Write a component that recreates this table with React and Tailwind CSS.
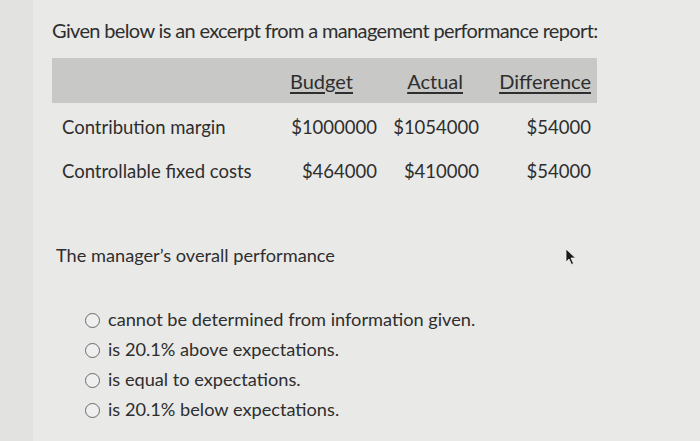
import React from "react";

const rows = [
  { label: "Contribution margin", budget: "$1000000", actual: "$1054000", diff: "$54000" },
  { label: "Controllable fixed costs", budget: "$464000", actual: "$410000", diff: "$54000" },
];

const options = [
  "cannot be determined from information given.",
  "is 20.1% above expectations.",
  "is equal to expectations.",
  "is 20.1% below expectations.",
];

const App = () => {
  return (
    <div
      className="flex h-[441px] w-[700px] bg-[#e2e2e1] text-[#2e2e2e]"
      style={{ fontFamily: "Lato, 'Open Sans', sans-serif" }}
    >
      <div className="w-[33px] shrink-0" />
      <div className="relative flex-1 bg-[#e9e9e8] pl-[19px] pt-[16px]">
        <p className="text-[20px] leading-[28px] tracking-[-0.65px]">
          Given below is an excerpt from a management performance report:
        </p>

        {/* Table */}
        <div className="mt-[14px] w-[545px] text-[18.5px]">
          <div className="flex h-[45px] items-center bg-[#c8c8c7] text-[20px]">
            <div className="w-[238px]" />
            <div className="w-[60px] text-center underline underline-offset-[3px]">Budget</div>
            <div className="w-[113px] text-right underline underline-offset-[3px]">Actual</div>
            <div className="w-[128px] text-right underline underline-offset-[3px]">Difference</div>
          </div>
          <div className="pt-[3px]">
            {rows.map((r) => (
              <div key={r.label} className="flex h-[44px] items-center">
                <div className="w-[235px] pl-[10px]">{r.label}</div>
                <div className="w-[90px] text-right">{r.budget}</div>
                <div className="w-[102px] text-right">{r.actual}</div>
                <div className="w-[112px] text-right">{r.diff}</div>
              </div>
            ))}
          </div>
        </div>

        <p className="mt-[49px] pl-[4px] text-[18.2px] leading-[24px]">
          The manager&rsquo;s overall performance
        </p>

        <div className="mt-[38px] flex flex-col pl-[33px] text-[18.2px]">
          {options.map((o) => (
            <label key={o} className="flex h-[30px] items-center gap-[8px]">
              <span className="h-[15px] w-[15px] rounded-full border-[1.5px] border-[#6a6a6a] bg-[#efefef]" />
              <span>{o}</span>
            </label>
          ))}
        </div>

        {/* mouse pointer */}
        <svg
          className="absolute left-[532px] top-[248px]"
          width="12"
          height="18"
          viewBox="0 0 12 18"
        >
          <path d="M1 1 L1 14 L4 11 L6.5 16.5 L8.5 15.5 L6 10 L10.5 10 Z" fill="#1a1a1a" stroke="#f0f0f0" strokeWidth="0.8" />
        </svg>
      </div>
    </div>
  );
};

export default App;
